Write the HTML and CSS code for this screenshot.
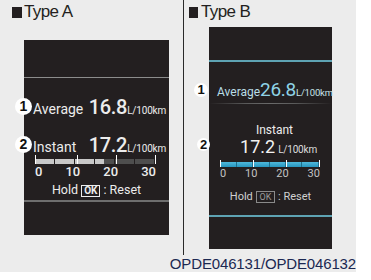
FILE: index.html
```html
<!DOCTYPE html>
<html lang="en">
<head>
    <meta charset="UTF-8" />
    <meta name="viewport" content="width=device-width, initial-scale=1.0" />
    <link rel="stylesheet" href="styles.css">
</head>
<body>
    <div class="sheet">
        <div class="panels">
            <!-- Type A cluster -->
            <section class="panel panel-a">
                <h2 class="type-title"><span class="type-mark"></span>Type A</h2>
                <div class="screen screen-a">
                    <div class="screen-head"></div>
                    <div class="reading reading-avg">
                        <span class="badge">1</span>
                        <span class="label">Average</span>
                        <span class="value">16.8<span class="unit">L/100km</span></span>
                    </div>
                    <div class="reading reading-inst">
                        <span class="badge">2</span>
                        <span class="label">Instant</span>
                        <span class="value">17.2<span class="unit">L/100km</span></span>
                    </div>
                    <div class="gauge">
                        <div class="bar">
                            <span class="tick tick-0"></span>
                            <span class="tick tick-10"></span>
                            <span class="tick tick-20"></span>
                            <span class="tick tick-30"></span>
                        </div>
                        <div class="scale"><span>0</span><span>10</span><span>20</span><span>30</span></div>
                    </div>
                    <div class="hold">Hold <span class="ok-key">OK</span> : Reset</div>
                    <div class="screen-foot"></div>
                </div>
            </section>

            <!-- Type B cluster -->
            <section class="panel panel-b">
                <h2 class="type-title"><span class="type-mark"></span>Type B</h2>
                <div class="screen screen-b">
                    <div class="screen-head"></div>
                    <div class="reading reading-avg">
                        <span class="badge">1</span>
                        <span class="label">Average</span>
                        <span class="value">26.8<span class="unit">L/100km</span></span>
                    </div>
                    <div class="glow"></div>
                    <div class="inst-label">
                        <span class="badge">2</span>
                        Instant
                    </div>
                    <div class="inst-value">17.2<span class="unit">L/100km</span></div>
                    <div class="gauge">
                        <div class="bar">
                            <span class="tick tick-0"></span>
                            <span class="tick tick-10"></span>
                            <span class="tick tick-20"></span>
                            <span class="tick tick-30"></span>
                        </div>
                        <div class="scale"><span>0</span><span>10</span><span>20</span><span>30</span></div>
                    </div>
                    <div class="hold">Hold <span class="ok-key">OK</span> : Reset</div>
                    <div class="screen-foot"></div>
                </div>
            </section>
        </div>
        <p class="caption">OPDE046131/OPDE046132</p>
    </div>
</body>
</html>
```

FILE: styles.css
```css
body {
    margin: 0;
    background-color: #ffffff;
    font-family: Roboto, "Liberation Sans", sans-serif;
}
.sheet {
    width: 356px;
    height: 272px;
    background-color: #ececec;
    display: flex;
    flex-direction: column;
}
.panels {
    display: flex;
    height: 255px;
}
.panel {
    display: flex;
    flex-direction: column;
}
.panel-a {
    width: 183px;
    border-right: 1px solid #2a2a2a;
}
.panel-b {
    width: 172px;
}
/* Section titles */
.type-title {
    margin: 2px 0 0 12px;
    height: 20px;
    line-height: 20px;
    font-family: "Liberation Sans", Arial, sans-serif;
    font-weight: normal;
    font-size: 17px;
    letter-spacing: -0.6px;
    color: #231f20;
    display: flex;
    align-items: center;
}
.panel-b .type-title {
    margin-left: 5px;
}
.type-mark {
    display: inline-block;
    width: 10px;
    height: 11px;
    background-color: #231f20;
    margin-right: 2px;
}
.panel-b .type-mark {
    width: 9px;
    margin-right: 3px;
}
/* Screens */
.screen {
    background-color: #231f20;
    display: flex;
    flex-direction: column;
    color: #ececec;
}
.screen-a {
    margin: 18px 0 0 24px;
    width: 145px;
    height: 195px;
}
.screen-b {
    margin: 5px 0 0 25px;
    width: 123px;
    height: 222px;
}
.screen-a .screen-head {
    height: 37px;
    border-bottom: 1px solid #8c8c8c;
}
.screen-b .screen-head {
    height: 33px;
    border-bottom: 2px solid #5ea3b3;
}
.reading {
    position: relative;
    display: flex;
    align-items: baseline;
    justify-content: space-between;
    height: 20px;
    line-height: 20px;
}
.screen-a .reading {
    padding: 0 3px 0 9px;
}
.screen-a .reading-avg {
    margin-top: 19px;
}
.screen-a .reading-inst {
    margin-top: 18px;
}
.label {
    font-size: 14px;
}
.value {
    font-size: 20px;
    font-weight: 500;
    letter-spacing: -0.3px;
}
.unit {
    font-size: 10px;
    font-weight: normal;
    letter-spacing: -0.2px;
}
/* Numbered callouts */
.badge {
    position: absolute;
    top: 1px;
    left: -9px;
    width: 17px;
    height: 17px;
    border-radius: 50%;
    background-color: #ffffff;
    color: #111111;
    font-family: "Liberation Sans", Arial, sans-serif;
    font-weight: bold;
    font-size: 14px;
    line-height: 17px;
    text-align: center;
}
/* Gauges */
.gauge {
    display: flex;
    flex-direction: column;
}
.bar {
    position: relative;
    height: 5px;
}
.tick {
    position: absolute;
    bottom: 0;
    width: 1px;
    background-color: #ffffff;
}
.tick-0 { left: 0; }
.tick-30 { right: 0; }
.scale {
    display: flex;
    justify-content: space-between;
    line-height: 12px;
    height: 12px;
}
.screen-a .gauge {
    margin: 4px 13px 0 11px;
}
.screen-a .bar {
    background:
        repeating-linear-gradient(to right, transparent 0 19px, #231f20 19px 20px),
        linear-gradient(to right, #c8c8c8 57%, #4e4e4e 57%);
}
.screen-a .tick {
    height: 9px;
}
.screen-a .tick-10 { left: 42px; }
.screen-a .tick-20 { left: 81px; }
.screen-a .scale {
    margin-top: 2px;
    font-size: 13px;
    font-weight: 500;
}
.hold {
    text-align: center;
    height: 14px;
    line-height: 14px;
    font-size: 12px;
}
.screen-a .hold {
    margin-top: 5px;
    font-size: 12.5px;
}
.ok-key {
    display: inline-block;
    border: 1px solid #ececec;
    font-size: 10px;
    font-weight: bold;
    line-height: 10px;
    padding: 0 2px;
}
.screen-a .screen-foot {
    margin-top: 3px;
    border-top: 2px solid #6e6e6e;
}
/* Type B specifics */
.screen-b .reading {
    margin-top: 18px;
    padding: 0 1px 0 8px;
    color: #9fd6e4;
}
.screen-b .label {
    font-size: 12px;
    color: #b9dde6;
}
.screen-b .value {
    font-size: 19px;
    font-weight: normal;
    color: #8fd3e6;
}
.screen-b .unit {
    font-size: 9.5px;
    color: #c8e4ea;
}
.screen-b .badge {
    left: -15px;
    top: 3px;
    width: 14px;
    height: 14px;
    line-height: 14px;
    font-size: 13px;
}
.glow {
    margin-top: 3px;
    height: 1px;
    background: linear-gradient(to right, transparent, #5a5a5a 30%, #6a6a6a 50%, #5a5a5a 70%, transparent);
}
.inst-label {
    position: relative;
    margin-top: 19px;
    height: 14px;
    line-height: 14px;
    font-size: 12px;
    text-align: center;
    padding-left: 8px;
}
.inst-label .badge {
    top: 15px;
    left: -12px;
    width: 13px;
    height: 13px;
    line-height: 13px;
}
.inst-value {
    margin-top: 1px;
    height: 18px;
    line-height: 18px;
    font-size: 18px;
    text-align: center;
    padding-left: 16px;
    color: #f2f2f2;
}
.inst-value .unit {
    font-size: 10px;
    margin-left: 3px;
    color: #dddddd;
}
.screen-b .gauge {
    margin: 6px 12px 0 11px;
}
.screen-b .bar {
    background:
        repeating-linear-gradient(to right, transparent 0 15.5px, #1c6f8c 15.5px 16.5px),
        linear-gradient(to bottom, #4fb8da, #2796bf);
}
.screen-b .tick {
    height: 7px;
}
.screen-b .tick-10 { left: 33px; }
.screen-b .tick-20 { left: 66px; }
.screen-b .scale {
    margin-top: 1px;
    font-size: 11px;
    color: #c4c4c4;
}
.screen-b .hold {
    margin-top: 10px;
    font-size: 11px;
    color: #d0d0d0;
}
.screen-b .ok-key {
    border-color: #8a8a8a;
    color: #9a9a9a;
    font-weight: normal;
    font-size: 9px;
    padding: 0 3px;
}
.screen-b .screen-foot {
    margin-top: 11px;
    border-top: 2px solid #5ea3b3;
}
/* Figure caption */
.caption {
    margin: 0;
    padding-top: 1px;
    text-align: right;
    font-family: "Liberation Sans", Arial, sans-serif;
    font-size: 15px;
    letter-spacing: -0.15px;
    line-height: 16px;
    color: #1b2852;
}
```
